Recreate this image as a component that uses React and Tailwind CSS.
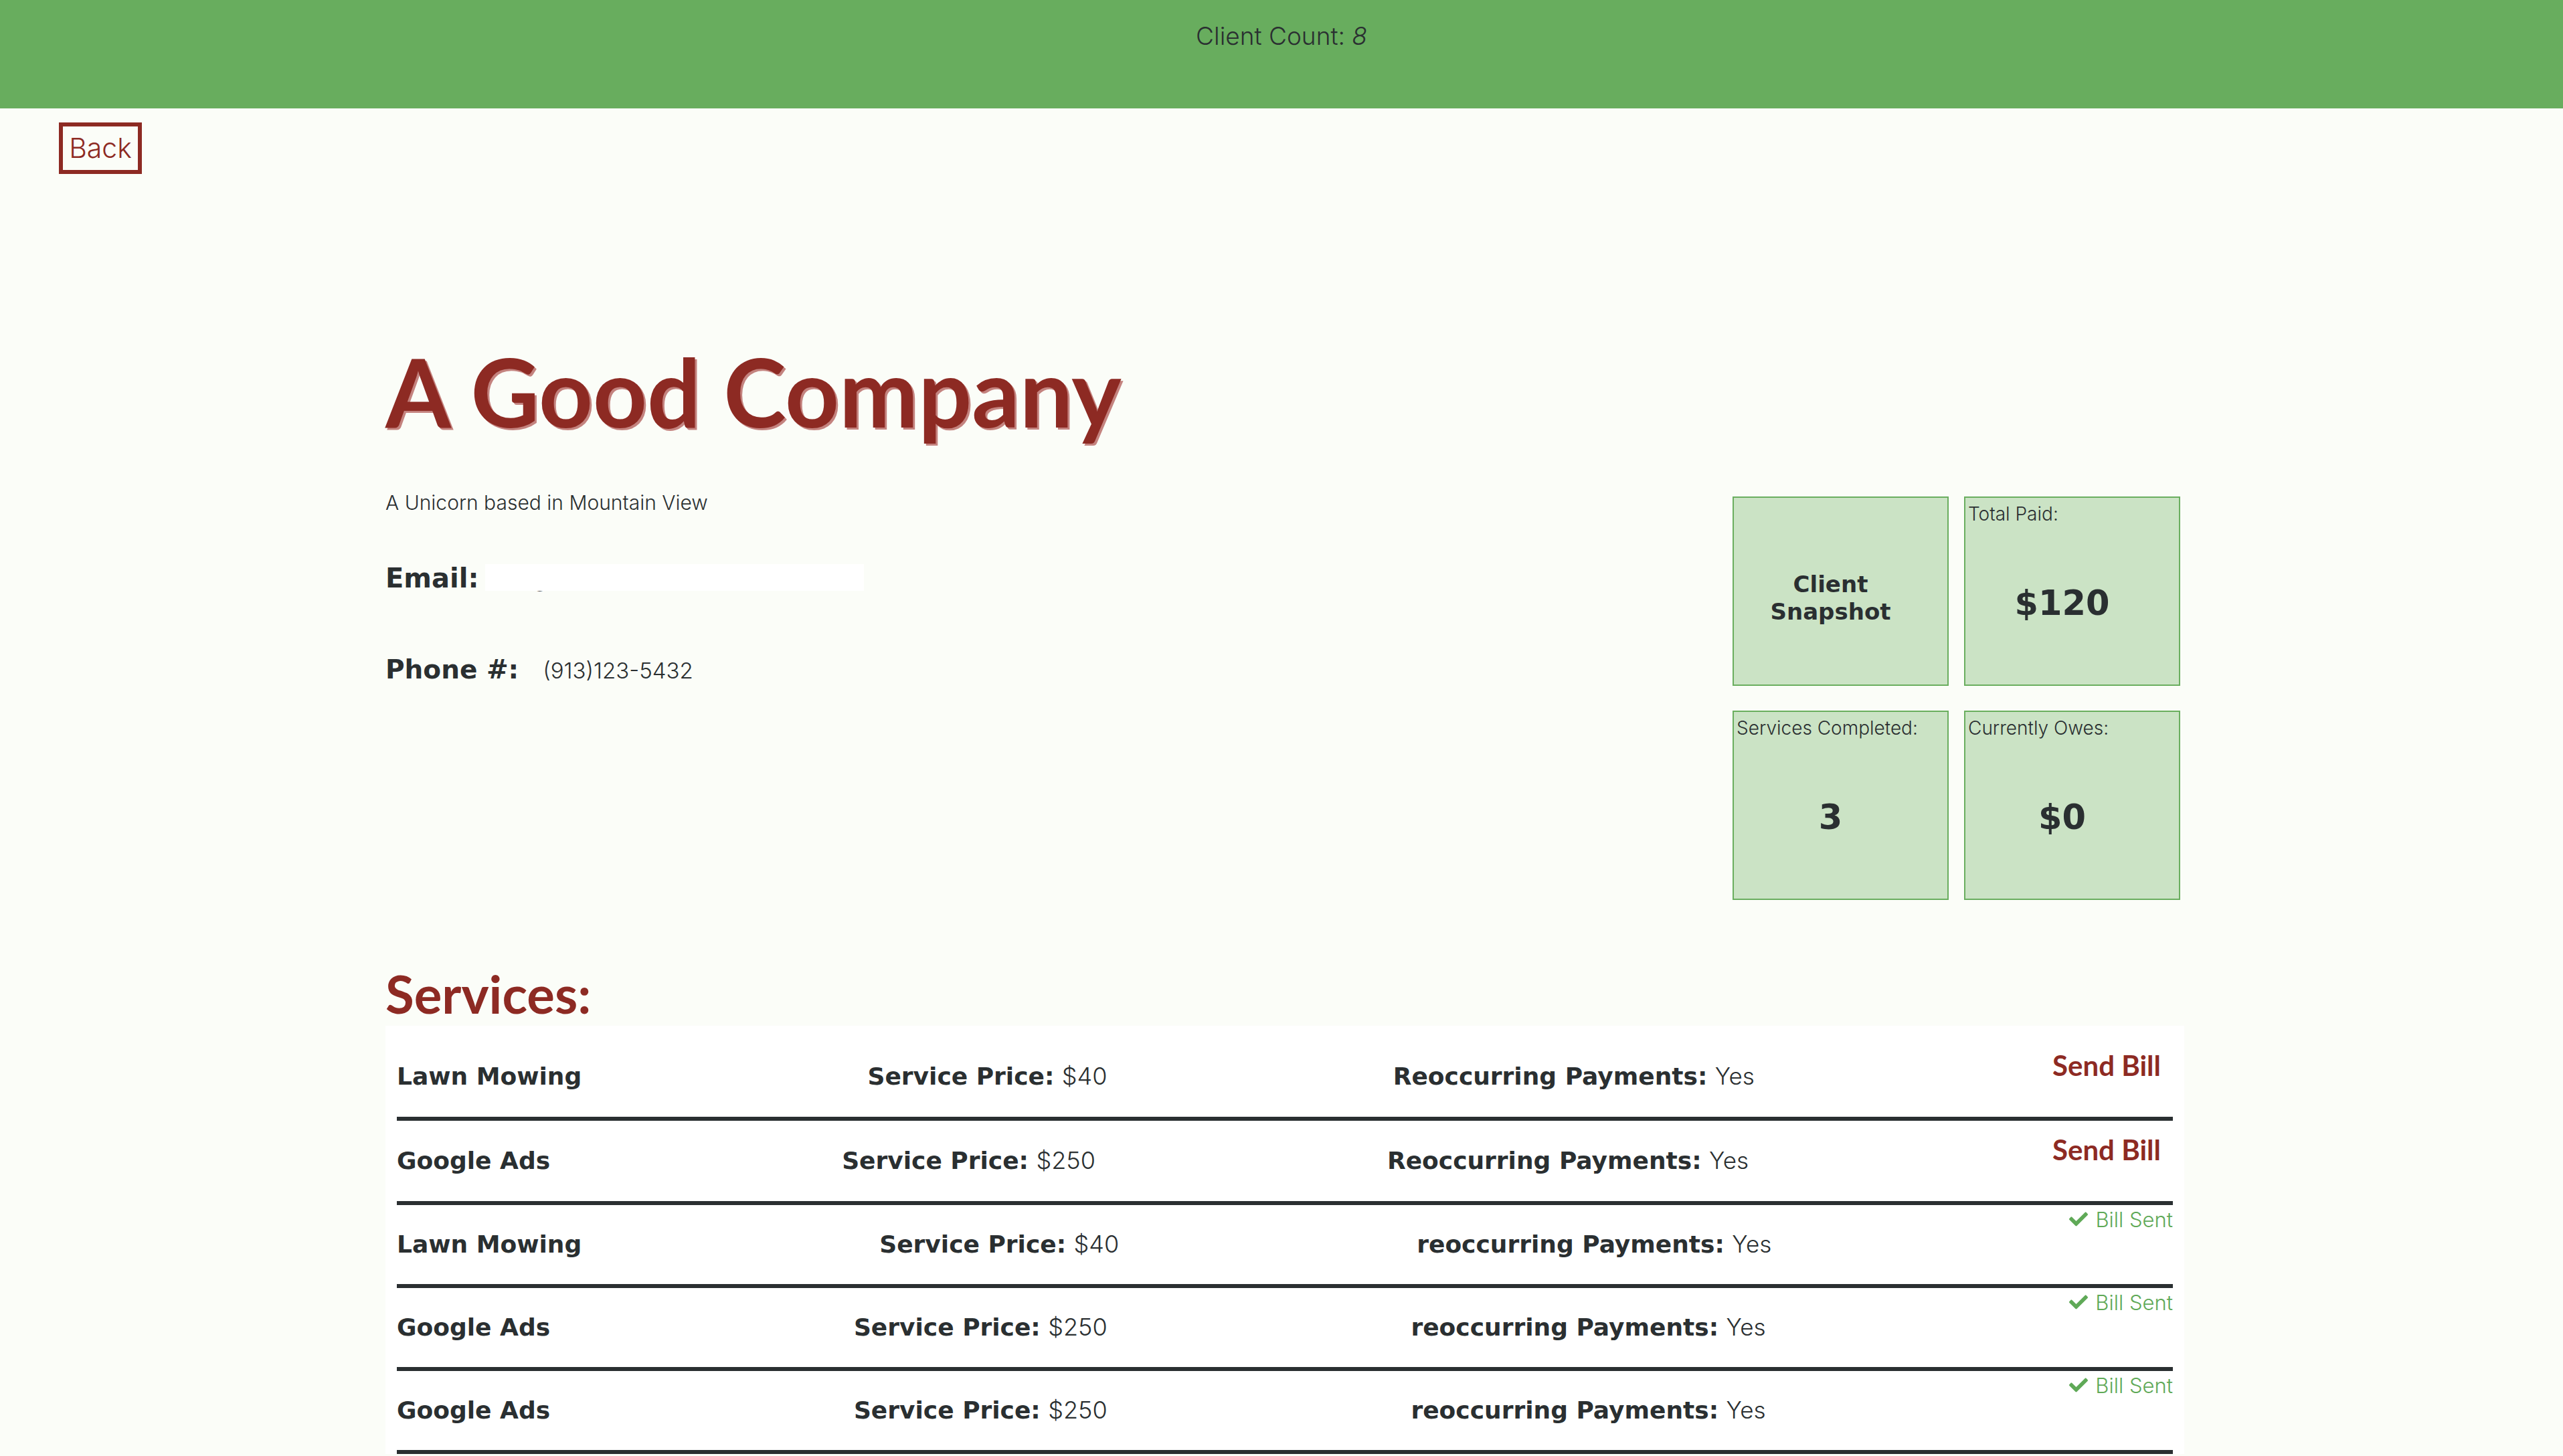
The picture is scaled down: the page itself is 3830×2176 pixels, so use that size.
import React from "react";
import { FaCheck } from "react-icons/fa";

const services = [
  { name: "Lawn Mowing", price: "$40", label: "Reoccurring", sent: false },
  { name: "Google Ads", price: "$250", label: "Reoccurring", sent: false },
  { name: "Lawn Mowing", price: "$40", label: "reoccurring", sent: true },
  { name: "Google Ads", price: "$250", label: "reoccurring", sent: true },
  { name: "Google Ads", price: "$250", label: "reoccurring", sent: true },
];

const StatCard = ({ label, value }) => (
  <div className="flex h-[283px] w-[323px] flex-col border-2 border-[#6aae5f] bg-[#cbe3c5]">
    <div className="px-[4px] pt-[8px] font-['Inter',sans-serif] text-[28px] font-light leading-[1.2]">{label}</div>
    <div className="flex flex-1 items-center justify-center pb-[6px] pr-[30px] text-[51px] font-bold leading-[1.2]">
      {value}
    </div>
  </div>
);

const ServiceRow = ({ service }) => (
  <div
    className={`flex items-center justify-between border-b-[6px] border-[#2a2f31] ${
      service.sent ? "h-[124px]" : "h-[126px]"
    }`}
  >
    <span className="text-[36px] font-bold leading-[1.2]">{service.name}</span>
    <span className="text-[36px] leading-[1.2]">
      <span className="font-bold">Service Price:</span>{" "}
      <span className="font-['Inter',sans-serif] font-light">{service.price}</span>
    </span>
    <span className="text-[36px] leading-[1.2]">
      <span className="font-bold">{service.label} Payments:</span>{" "}
      <span className="font-['Inter',sans-serif] text-[35px] font-light">Yes</span>
    </span>
    {service.sent ? (
      <span className="mt-[3px] flex items-center gap-[11px] self-start font-['Inter',sans-serif] text-[31px] font-light leading-[1.2] text-[#5fa957]">
        <FaCheck className="h-[28px] w-[28px]" />
        Bill Sent
      </span>
    ) : (
      <button className="mt-[18px] self-start px-[18px] font-['Lato',sans-serif] text-[42px] font-bold leading-[1.2] text-[#8d2a23]">
        Send Bill
      </button>
    )}
  </div>
);

export default function App() {
  return (
    <div className="min-h-screen bg-[#fbfdf8] font-['DejaVu_Sans',sans-serif] text-[#2a2f31]">
      {/* Header */}
      <header className="h-[162px] bg-[#68ad5e] pt-[32px] text-center font-['Inter',sans-serif] text-[37px] font-light leading-[1.2]">
        Client Count: <em>8</em>
      </header>

      <div className="pl-[88px] pt-[21px]">
        <button className="flex h-[77px] w-[124px] items-center justify-center border-[6px] border-[#8d2a23] font-['Inter',sans-serif] text-[41px] font-light text-[#8d2a23]">
          Back
        </button>
      </div>

      <main className="ml-[576px] w-[2688px] pb-[80px]">
        <h1 className="mt-[240px] font-['Lato',sans-serif] text-[141px] font-bold leading-[1.2] text-[#8d2a23] [text-shadow:3px_3px_0px_#c4837f]">
          A Good Company
        </h1>

        {/* Info + snapshot */}
        <div className="mt-[64px] flex justify-between">
          <div>
            <p className="font-['Inter',sans-serif] text-[30px] font-light leading-[1.2]">
              A Unicorn based in Mountain View
            </p>
            <div className="mt-[71px] flex items-baseline gap-[10px]">
              <span className="text-[40px] font-bold leading-[1.2]">Email:</span>
              <span className="relative font-['Inter',sans-serif] text-[30px] font-light leading-[1.2]">
                hello@abcmedia.com
                <span className="absolute left-0 top-[-6px] h-[40px] w-[566px] bg-white" />
              </span>
            </div>
            <div className="mt-[90px] flex items-baseline gap-[36px]">
              <span className="text-[39px] font-bold leading-[1.2]">Phone #:</span>
              <span className="font-['Inter',sans-serif] text-[33px] font-light leading-[1.2]">(913)123-5432</span>
            </div>
          </div>

          <div className="mr-[6px] mt-[9px] grid grid-cols-2 gap-x-[23px] gap-y-[37px]">
            <div className="flex h-[283px] w-[323px] items-center justify-center border-2 border-[#6aae5f] bg-[#cbe3c5] pr-[30px] pt-[20px] text-center text-[34px] font-bold leading-[41px]">
              Client
              <br />
              Snapshot
            </div>
            <StatCard label="Total Paid:" value="$120" />
            <StatCard label="Services Completed:" value="3" />
            <StatCard label="Currently Owes:" value="$0" />
          </div>
        </div>

        {/* Services */}
        <h2 className="mt-[94px] font-['Lato',sans-serif] text-[78px] font-bold leading-[1.2] text-[#8d2a23]">
          Services:
        </h2>
        <div className="bg-white px-[17px] pt-[16px]">
          {services.map((service, i) => (
            <ServiceRow key={i} service={service} />
          ))}
        </div>
      </main>
    </div>
  );
}
